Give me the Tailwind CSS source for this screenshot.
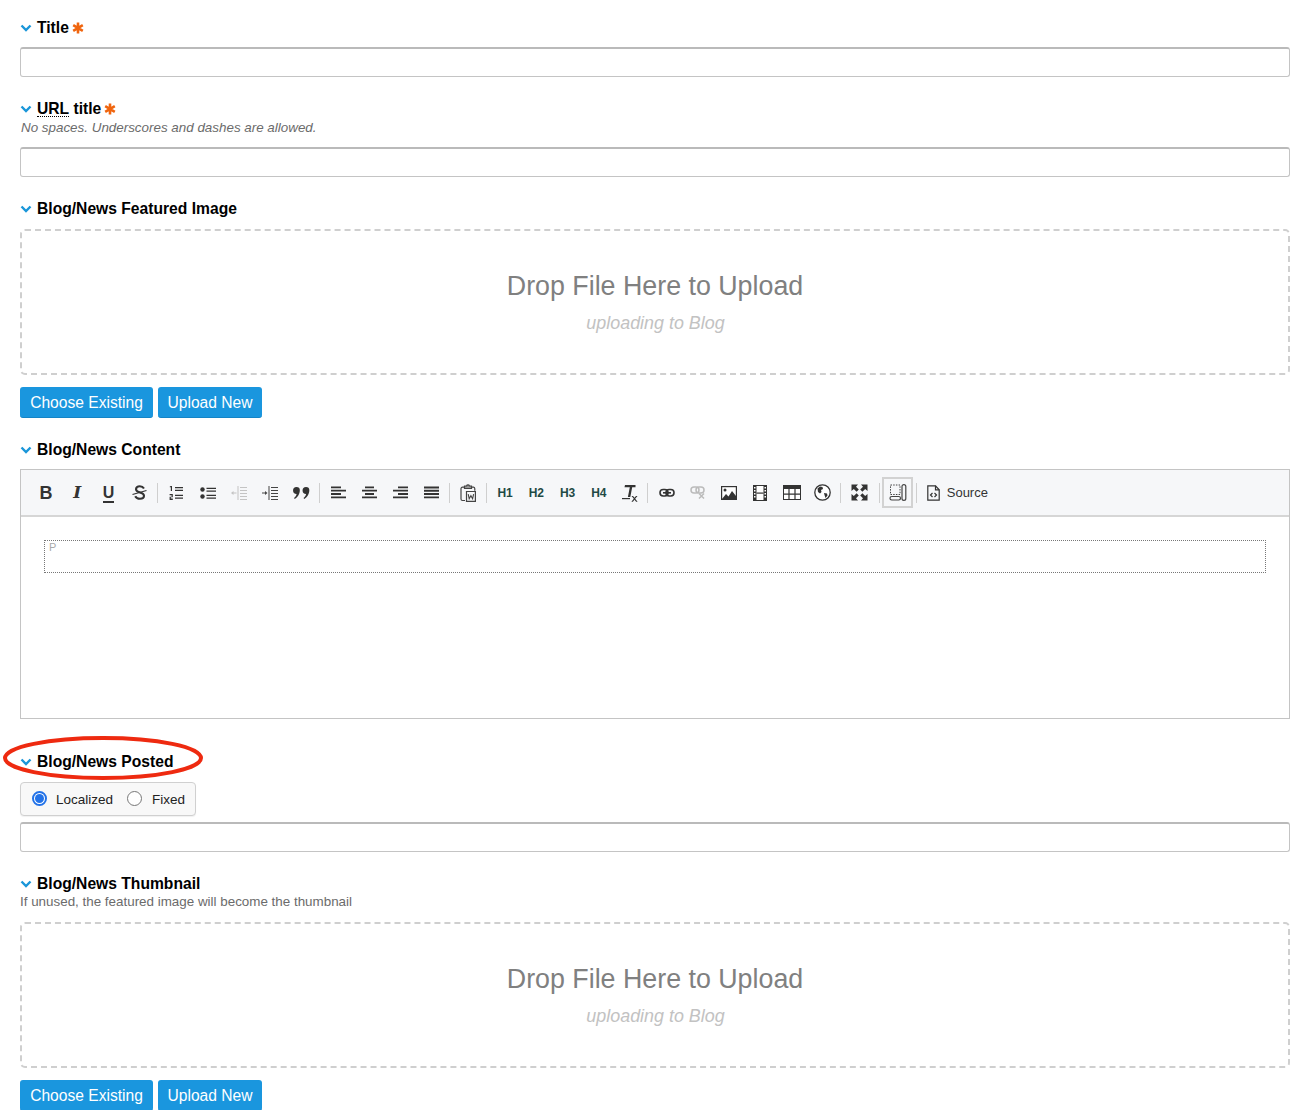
<!DOCTYPE html>
<html lang="en">
<head>
<meta charset="UTF-8">
<title>Entry form</title>
<script src="https://cdn.jsdelivr.net/npm/@tailwindcss/browser@4"></script>
</head>
<body class="bg-white font-['Liberation_Sans',Arial,sans-serif] text-black overflow-hidden h-[1110px]">
<div class="relative px-[20px] w-[1310px]">

  <!-- Title -->
  <div class="h-[47px] pt-[19px]">
    <div class="flex items-center h-[18px] gap-[5px]">
      <svg class="w-[12px] h-[8px]" viewBox="0 0 12 8"><path d="M1.500 1.500 6 6l4.500-4.500" fill="none" stroke="#1a96d9" stroke-width="2.400"/></svg>
      <span class="text-[15.65px] font-bold leading-[18px]">Title</span>
      <svg class="w-[12px] h-[12px] -ml-[2px]" viewBox="0 0 12 12" stroke="#f0650e" stroke-width="2.600"><path d="M6 .5v11M1.200 3.200l9.600 5.600M10.800 3.200l-9.600 5.600"/></svg>
    </div>
  </div>
  <div class="h-[30px] border border-[#c4c4c4] border-t-2 border-t-[#bababa] rounded-[3px]"></div>

  <!-- URL title -->
  <div class="pt-[23px] h-[59px]">
    <div class="flex items-center h-[18px] gap-[5px]">
      <svg class="w-[12px] h-[8px]" viewBox="0 0 12 8"><path d="M1.500 1.500 6 6l4.500-4.500" fill="none" stroke="#1a96d9" stroke-width="2.400"/></svg>
      <span class="text-[15.65px] font-bold leading-[18px]"><span class="border-b border-dotted border-black inline-block leading-[15px]">URL</span> title</span>
      <svg class="w-[12px] h-[12px] -ml-[2px]" viewBox="0 0 12 12" stroke="#f0650e" stroke-width="2.600"><path d="M6 .5v11M1.200 3.200l9.600 5.600M10.800 3.200l-9.600 5.600"/></svg>
    </div>
    <p class="text-[13.4px] italic text-[#6b6b6b] leading-[20px] ml-[1px]">No spaces. Underscores and dashes are allowed.</p>
  </div>
  <div class="mt-[11px] h-[30px] border border-[#c4c4c4] border-t-2 border-t-[#bababa] rounded-[3px]"></div>

  <!-- Featured image -->
  <div class="pt-[23px] h-[52px]">
    <div class="flex items-center h-[18px] gap-[5px]">
      <svg class="w-[12px] h-[8px]" viewBox="0 0 12 8"><path d="M1.500 1.500 6 6l4.500-4.500" fill="none" stroke="#1a96d9" stroke-width="2.400"/></svg>
      <span class="text-[15.65px] font-bold leading-[18px]">Blog/News Featured Image</span>
    </div>
  </div>
  <div class="h-[146px] border-2 border-dashed border-[#cfcfcf] rounded-[5px] flex flex-col items-center pt-[37px]">
    <div class="text-[26.8px] leading-[36px] text-[#808080]">Drop File Here to Upload</div>
    <div class="text-[17.9px] italic leading-[24px] mt-[7px] text-[#c2c2c2] ml-[1px]">uploading to Blog</div>
  </div>
  <div class="flex gap-[5px] mt-[12px]">
    <button class="h-[31px] w-[133px] pt-[1px] bg-[#1a96de] text-white text-[15.6px] rounded-[3px] border-b border-[#1484c6]">Choose Existing</button>
    <button class="h-[31px] w-[104px] pt-[1px] bg-[#1a96de] text-white text-[15.6px] rounded-[3px] border-b border-[#1484c6]">Upload New</button>
  </div>

  <!-- Content -->
  <div class="pt-[23px] h-[51px]">
    <div class="flex items-center h-[18px] gap-[5px]">
      <svg class="w-[12px] h-[8px]" viewBox="0 0 12 8"><path d="M1.500 1.500 6 6l4.500-4.500" fill="none" stroke="#1a96d9" stroke-width="2.400"/></svg>
      <span class="text-[15.65px] font-bold leading-[18px]">Blog/News Content</span>
    </div>
  </div>
  <div class="h-[250px] border border-[#c4c4c4]">
    <div class="h-[47px] bg-[#f6f7f9] border-b-2 border-[#d6d6d6] flex items-center pl-[9.4px] text-[#333]">
      <span class="w-[31.25px] text-center font-bold text-[18px] leading-none">B</span>
      <span class="w-[31.25px] text-center font-bold italic text-[17px] leading-none font-['DejaVu_Serif',serif]">I</span>
      <span class="w-[31.25px] text-center font-bold text-[16px] leading-none"><span class="border-b-2 border-[#333]">U</span></span>
      <span class="w-[31.25px] flex justify-center"><svg class="w-[15px] h-[15px]" viewBox="0 0 15 15" fill="none" stroke="#333"><path d="M12 3.500C11 1.800 9.500 1.200 7.800 1.200 5.500 1.200 4 2.400 4 4.200c0 4 8 2.800 8 6.600 0 1.900-1.700 3-4 3-2 0-3.800-.8-4.800-2.600" stroke-width="2.100"/><path d="M.5 9.500 14.500 5.500" stroke-width="1.300"/></svg></span>
      <i class="w-px h-[20px] bg-[#cfcfcf] ml-[1.6px] mr-[2.8px]"></i>
      <span class="w-[31.25px] flex justify-center"><svg class="w-[14px] h-[15px]" viewBox="0 0 14 15" fill="#333"><path d="M6 2h8v1.300H6zM6 4.700h8V6H6zM6 9.700h8V11H6zM6 12.500h8v1.300H6z"/><path d="M1.800 1h1.200v5H1.800V2.300H.8V1.500zM.6 9h3.200v3.200H1.800v1.300h2V15H.6v-3.200h2v-1.500h-2z"/></svg></span>
      <span class="w-[31.25px] flex justify-center"><svg class="w-[16px] h-[14px]" viewBox="0 0 16 14" fill="#333"><circle cx="2.500" cy="3.500" r="2.200"/><circle cx="2.500" cy="10.500" r="2.200"/><path d="M6.500 1.800H16v1.300H6.500zM6.500 4.500H16v1.300H6.500zM6.500 8.800H16v1.300H6.500zM6.500 11.500H16v1.300H6.500z"/></svg></span>
      <span class="w-[31.25px] flex justify-center"><svg class="w-[16px] h-[16px]" viewBox="0 0 16 16" fill="#c4c4c4"><path d="M9 2h7v1H9zM9 5h7v1H9zM9 8h7v1H9zM9 11h7v1H9zM9 14h7v1H9zM6.500 1h1v14h-1zM5.500 7.500H2.500V6L0 8l2.500 2V8.500h3z"/></svg></span>
      <span class="w-[31.25px] flex justify-center"><svg class="w-[16px] h-[16px]" viewBox="0 0 16 16" fill="#444"><path d="M9 2h7v1H9zM9 5h7v1H9zM9 8h7v1H9zM9 11h7v1H9zM9 14h7v1H9zM6.500 1h1v14h-1zM0 7.500h3V6l2.500 2L3 10V8.500H0z"/></svg></span>
      <span class="w-[31.25px] flex justify-center"><svg class="w-[17px] h-[12px]" viewBox="0 0 17 12" fill="#333"><path d="M3.500 0a3.300 3.300 0 0 1 3.300 3.500C6.800 7 4.500 10.500 1.800 12l-.8-1c1.300-1 2.300-2.300 2.600-4A3.300 3.300 0 0 1 3.500 0zM13 0a3.300 3.300 0 0 1 3.300 3.500C16.300 7 14 10.500 11.300 12l-.8-1c1.300-1 2.300-2.300 2.600-4A3.300 3.300 0 0 1 13 0z"/></svg></span>
      <i class="w-px h-[20px] bg-[#cfcfcf] ml-[1.6px] mr-[2.8px]"></i>
      <span class="w-[31.25px] flex justify-center"><svg class="w-[15px] h-[13px]" viewBox="0 0 15 13" fill="#333"><path d="M0 .5h10v1.800H0zM0 3.800h15v1.800H0zM0 7.100h10v1.800H0zM0 10.400h15v1.800H0z"/></svg></span>
      <span class="w-[31.25px] flex justify-center"><svg class="w-[15px] h-[13px]" viewBox="0 0 15 13" fill="#333"><path d="M3 .5h9v1.800H3zM0 3.800h15v1.800H0zM3 7.100h9v1.800H3zM0 10.400h15v1.800H0z"/></svg></span>
      <span class="w-[31.25px] flex justify-center"><svg class="w-[15px] h-[13px]" viewBox="0 0 15 13" fill="#333"><path d="M5 .5h10v1.800H5zM0 3.800h15v1.800H0zM5 7.100h10v1.800H5zM0 10.400h15v1.800H0z"/></svg></span>
      <span class="w-[31.25px] flex justify-center"><svg class="w-[15px] h-[13px]" viewBox="0 0 15 13" fill="#333"><path d="M0 .5h15v1.900H0zM0 3.800h15v1.900H0zM0 7.100h15v1.900H0zM0 10.400h15v1.900H0z"/></svg></span>
      <i class="w-px h-[20px] bg-[#cfcfcf] ml-[1.6px] mr-[2.8px]"></i>
      <span class="w-[31.25px] flex justify-center"><svg class="w-[16px] h-[18px]" viewBox="0 0 16 18" fill="none" stroke="#444" stroke-width="1.200"><path d="M4 3.200H2.500a1.500 1.500 0 0 0-1.500 1.500V15a1.500 1.500 0 0 0 1.500 1.500H5M12 3.200h1.500a1.500 1.500 0 0 1 1.300 1.500v2"/><path d="M4.500 4.500V2h2a1.600 1.600 0 0 1 3 0h2v2.500z" fill="#999"/><path d="M6.500 7.500h8.900V17.400H6.500z"/><path d="M8.200 10.200l1 4.500 1.700-3 1.700 3 1-4.500" stroke-width="1.100"/></svg></span>
      <i class="w-px h-[20px] bg-[#cfcfcf] ml-[1.6px] mr-[2.8px]"></i>
      <span class="w-[31.25px] text-center text-[12px] font-bold text-[#1f4a45]">H1</span>
      <span class="w-[31.25px] text-center text-[12px] font-bold text-[#1f4a45]">H2</span>
      <span class="w-[31.25px] text-center text-[12px] font-bold text-[#1f4a45]">H3</span>
      <span class="w-[31.25px] text-center text-[12px] font-bold text-[#1f4a45]">H4</span>
      <span class="w-[31.25px] flex justify-center"><svg class="w-[16px] h-[18px]" viewBox="0 0 16 18" fill="#333"><path d="M3 1h10.500v2.300H10.200L8.300 13H5.900l1.900-9.700H2.500z"/><path d="M0 14h8v1.200H0z"/><path d="M9.500 12h1.500l1.500 1.800L14 12h1.500l-2.300 2.800 2.400 3h-1.500l-1.600-2-1.600 2H9.400l2.400-3z"/></svg></span>
      <i class="w-px h-[20px] bg-[#cfcfcf] ml-[1.6px] mr-[2.8px]"></i>
      <span class="w-[31.25px] flex justify-center"><svg class="w-[16px] h-[10px]" viewBox="0 0 16 10" fill="none" stroke="#333" stroke-width="1.600"><rect x="1" y="1.500" width="8" height="6.500" rx="3.200"/><rect x="7" y="1.500" width="8" height="6.500" rx="3.200"/><path d="M4 4.800h8"/></svg></span>
      <span class="w-[31.25px] flex justify-center"><svg class="w-[16px] h-[13px]" viewBox="0 0 16 13" fill="none" stroke="#bbb" stroke-width="1.500"><rect x="1" y="1" width="8" height="6" rx="3"/><rect x="6" y="1" width="8" height="6" rx="3"/><path d="M9 7.500l5 5M14 7.500l-5 5"/></svg></span>
      <span class="w-[31.25px] flex justify-center"><svg class="w-[16px] h-[14px]" viewBox="0 0 16 14"><rect x=".6" y=".6" width="14.800" height="12.800" fill="#fff" stroke="#333" stroke-width="1.200"/><circle cx="4" cy="4" r="1.500" fill="#333"/><path d="M1 13l4-5 2.500 2.500L11 5l4 5v3z" fill="#333"/></svg></span>
      <span class="w-[31.25px] flex justify-center"><svg class="w-[14px] h-[16px]" viewBox="0 0 14 16"><path d="M.5.500h13v15H.5z" fill="#fff" stroke="#333"/><path d="M0 0h3.500v16H0zM10.500 0H14v16h-3.500z" fill="#333"/><path d="M1 2h1.500v1.500H1zM1 5h1.500v1.500H1zM1 8h1.500v1.500H1zM1 11h1.500v1.500H1zM11.500 2H13v1.500h-1.500zM11.500 5H13v1.500h-1.500zM11.500 8H13v1.500h-1.500zM11.500 11H13v1.500h-1.500z" fill="#fff"/><path d="M3.500 7.500h7v1.200h-7z" fill="#333"/></svg></span>
      <span class="w-[31.25px] flex justify-center"><svg class="w-[18px] h-[15px]" viewBox="0 0 18 15"><rect x=".5" y=".5" width="17" height="14" fill="#fff" stroke="#333"/><path d="M0 0h18v4H0z" fill="#333"/><path d="M6 4v10.500M12 4v10.500M.5 9.200h17" stroke="#333" stroke-width="1.200"/></svg></span>
      <span class="w-[31.25px] flex justify-center"><svg class="w-[17px] h-[17px]" viewBox="0 0 17 17"><circle cx="8.500" cy="8.500" r="7.700" fill="#fff" stroke="#333" stroke-width="1.300"/><path d="M3.500 4.500l2.500-2 2.500.5.500 2-2 1 .5 2-1.500 1.500L4 8zM10 9l3 .5.500 2-2 2.500-1-3z" fill="#333"/></svg></span>
      <i class="w-px h-[20px] bg-[#cfcfcf] ml-[1.6px] mr-[2.8px]"></i>
      <span class="w-[31.25px] flex justify-center"><svg class="w-[17px] h-[17px]" viewBox="0 0 17 17" fill="#333"><path d="M.5.500h6.500L5 2.800l2.800 2.800-2.200 2.200L2.800 5 .5 7zM16.500.500V7L14.200 5l-2.800 2.800-2.200-2.200L12 2.800 10 .5zM.5 16.500V10l2.300 2 2.800-2.800 2.200 2.200L5 14.200 7 16.500zM16.500 16.500H10l2-2.300-2.800-2.800 2.200-2.200 2.800 2.800 2.300-2z"/></svg></span>
      <i class="w-px h-[20px] bg-[#cfcfcf] ml-[3.500px] mr-[2.500px]"></i>
      <span class="w-[31px] h-[31px] border-2 border-[#d2d2d2] flex items-center justify-center"><svg class="w-[18px] h-[17px]" viewBox="0 0 18 17" fill="none" stroke="#444"><path d="M1.500 1h9.500v9.500H1.500z" stroke-dasharray="1.500 1.200"/><rect x="1" y="12.500" width="10.500" height="3.500" rx="1.700" stroke-width="1.200"/><rect x="13" y=".6" width="3.800" height="15.800" rx="1.900" stroke-width="1.200"/></svg></span>
      <i class="w-px h-[20px] bg-[#cfcfcf] ml-[2.500px]"></i>
      <span class="flex items-center ml-[10px] gap-[7px] text-[13px] text-[#333]"><svg class="w-[13px] h-[16px]" viewBox="0 0 13 16" fill="none" stroke="#333" stroke-width="1.200"><path d="M.8.800h7.700l3.700 4v10.400H.8z"/><path d="M8.500.8v4h3.700"/><path d="M5.500 8 3.500 10l2 2M7.500 8l2 2-2 2"/></svg>Source</span>
    </div>
    <div class="px-[23px] pt-[23px]">
      <div class="h-[33px] border border-dotted border-[#777] pl-[4px] text-[11px] leading-[12px] text-[#aaa]">P</div>
    </div>
  </div>

  <!-- Posted -->
  <div class="pt-[34px] h-[63px]">
    <div class="flex items-center h-[18px] gap-[5px]">
      <svg class="w-[12px] h-[8px]" viewBox="0 0 12 8"><path d="M1.500 1.500 6 6l4.500-4.500" fill="none" stroke="#1a96d9" stroke-width="2.400"/></svg>
      <span class="text-[15.65px] font-bold leading-[18px]">Blog/News Posted</span>
    </div>
  </div>
  <div class="w-[176px] h-[34px] bg-[#f8f8f8] border border-[#d0d0d0] rounded-[4px] flex items-center pl-[11px] text-[13.5px] text-[#222] shadow-[0_1px_1px_rgba(0,0,0,0.06)]">
    <span class="w-[15px] h-[15px] rounded-full border-2 border-[#2272e8] bg-white flex items-center justify-center -mt-[1px]"><i class="w-[9px] h-[9px] rounded-full bg-[#2272e8]"></i></span>
    <span class="ml-[9px] mt-[3px]">Localized</span>
    <span class="w-[15px] h-[15px] rounded-full border border-[#777] bg-white ml-[14px] -mt-[1px]"></span>
    <span class="ml-[10px] mt-[3px]">Fixed</span>
  </div>
  <div class="mt-[6px] h-[30px] border border-[#c4c4c4] border-t-2 border-t-[#bababa] rounded-[3px]"></div>

  <!-- Thumbnail -->
  <div class="pt-[23px] h-[70px]">
    <div class="flex items-center h-[18px] gap-[5px]">
      <svg class="w-[12px] h-[8px]" viewBox="0 0 12 8"><path d="M1.500 1.500 6 6l4.500-4.500" fill="none" stroke="#1a96d9" stroke-width="2.400"/></svg>
      <span class="text-[15.65px] font-bold leading-[18px]">Blog/News Thumbnail</span>
    </div>
    <p class="text-[13.4px] text-[#6b6b6b] leading-[18px]">If unused, the featured image will become the thumbnail</p>
  </div>
  <div class="h-[146px] border-2 border-dashed border-[#cfcfcf] rounded-[5px] flex flex-col items-center pt-[37px]">
    <div class="text-[26.8px] leading-[36px] text-[#808080]">Drop File Here to Upload</div>
    <div class="text-[17.9px] italic leading-[24px] mt-[7px] text-[#c2c2c2] ml-[1px]">uploading to Blog</div>
  </div>
  <div class="flex gap-[5px] mt-[12px]">
    <button class="h-[31px] w-[133px] pt-[1px] bg-[#1a96de] text-white text-[15.6px] rounded-[3px] border-b border-[#1484c6]">Choose Existing</button>
    <button class="h-[31px] w-[104px] pt-[1px] bg-[#1a96de] text-white text-[15.6px] rounded-[3px] border-b border-[#1484c6]">Upload New</button>
  </div>

  <!-- red marker ring drawn over the label -->
  <svg class="absolute left-[2px] top-[735px] w-[202px] h-[46px]" viewBox="0 0 202 46" fill="none"><ellipse cx="101" cy="23" rx="98" ry="20" stroke="#ee2a10" stroke-width="4"/></svg>
</div>
</body>
</html>
